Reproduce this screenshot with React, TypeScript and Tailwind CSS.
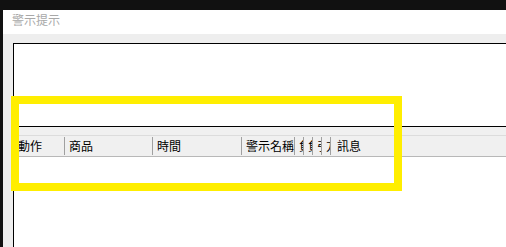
const cols: { label: string; w: number }[] = [
  { label: '動作', w: 51 },
  { label: '商品', w: 88 },
  { label: '時間', w: 89 },
  { label: '警示名稱', w: 53 },
  { label: '負', w: 9 },
  { label: '負', w: 9 },
  { label: '引', w: 9 },
  { label: '方', w: 9 },
];

export default function App() {
  return (
    <div
      className="relative w-[506px] h-[247px] overflow-hidden bg-[#111111] flex flex-col"
      style={{ fontFamily: '"Noto Sans CJK TC", "Noto Sans CJK SC", sans-serif' }}
    >
      {/* dark strip above the window */}
      <div className="h-[10px] flex-none" />

      {/* window */}
      <div className="flex-1 ml-[3px] flex flex-col bg-white min-h-0">
        {/* title bar */}
        <div className="h-[24px] flex-none flex items-center pb-[5px] pl-[9px] text-[12px] leading-none text-[#a8a8a8]">
          警示提示
        </div>

        {/* client area */}
        <div className="flex-1 bg-[#eeeeee] pt-[9px] pl-[10px] flex flex-col min-h-0">
          <div className="flex-1 border-l border-t border-black bg-white flex flex-col min-h-0">
            {/* empty upper panel */}
            <div className="h-[83px] flex-none border-b border-black" />

            {/* list header */}
            <div className="flex-none bg-[#f0f0f0]">
              <div className="h-[9px] border-b border-[#dcdcdc]" />
              <div className="h-[21px] flex border-b border-[#b8b8b8] text-[12px] leading-none text-black">
                {cols.map((c, i) => (
                  <div
                    key={i}
                    className="flex-none flex items-center pl-[4px] overflow-hidden whitespace-nowrap border-r border-[#a0a0a0] my-[1px]"
                    style={{ width: c.w }}
                  >
                    {c.label}
                  </div>
                ))}
                <div className="flex-1 flex items-center pl-[6px] whitespace-nowrap">訊息</div>
              </div>
            </div>

            {/* list body */}
            <div className="flex-1 bg-white" />
          </div>
        </div>
      </div>

      {/* yellow highlight box */}
      <div className="absolute left-[11px] top-[96px] w-[391px] h-[95px] border-[8px] border-[#ffee00]" />
    </div>
  );
}
